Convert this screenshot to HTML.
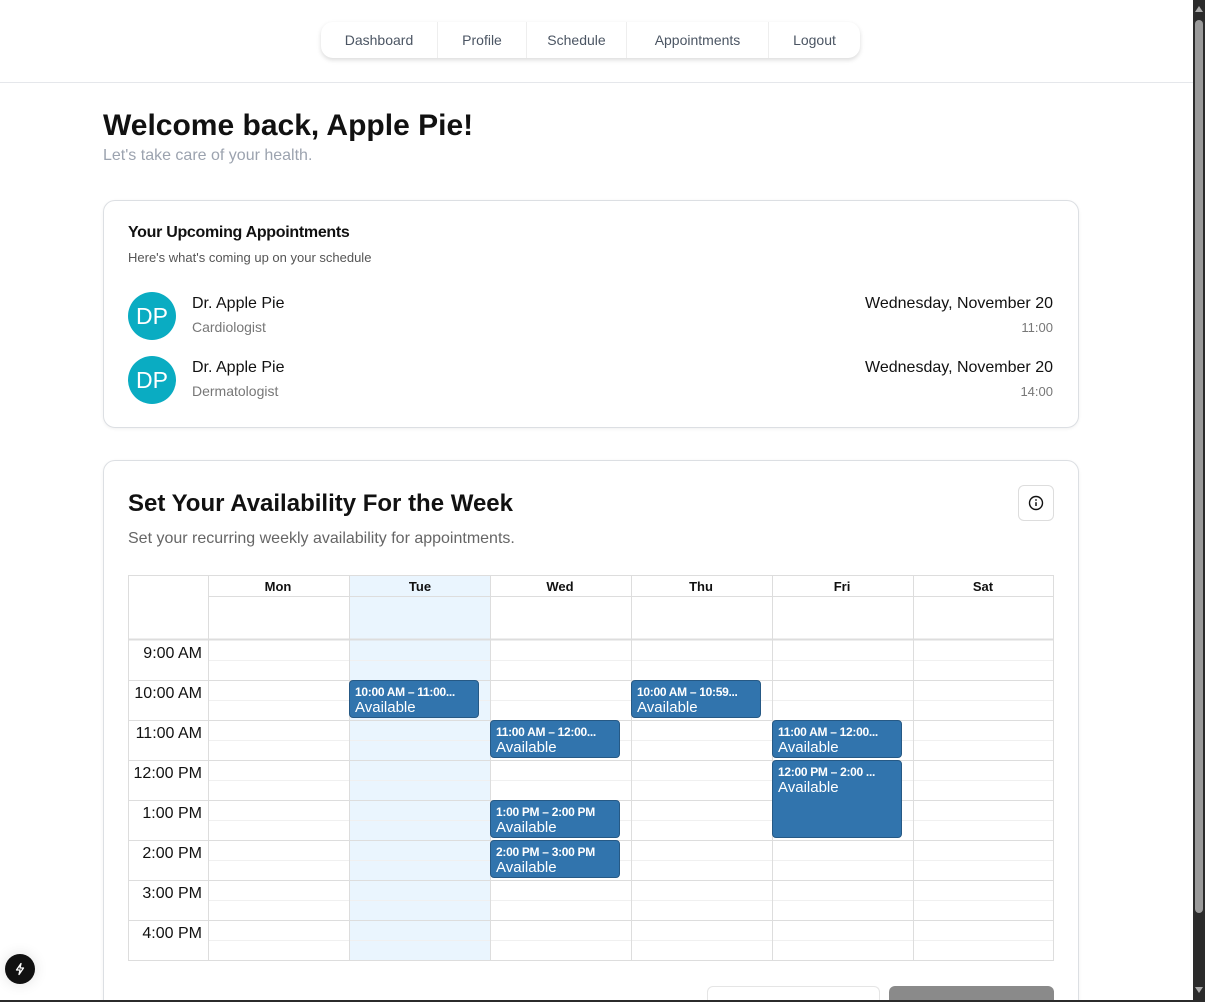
<!DOCTYPE html>
<html style="width:1205px;height:1002px;overflow:hidden"><head><style>
*{box-sizing:border-box;margin:0;padding:0}
body{width:1205px;height:1002px;overflow:hidden;background:#fff;font-family:"Liberation Sans",Arial,sans-serif;position:relative;color:#111}
.abs{position:absolute}
.nav{left:321px;top:22px;width:539px;height:36px;border-radius:12px;background:#fff;box-shadow:0 2px 5px rgba(0,0,0,.15);display:flex}
.nav div{display:flex;align-items:center;justify-content:center;font-size:14px;color:#4b5563;border-right:1px solid #eee;height:100%}
.nav div:last-child{border-right:none}
.hr{left:0;top:82px;width:1193px;height:1px;background:#e5e7eb}
.card{border:1px solid #dcdfe3;border-radius:12px;background:#fff;box-shadow:0 1px 3px rgba(0,0,0,.06)}
.av{width:48px;height:48px;border-radius:50%;background:#0aacc2;color:#fff;font-size:23px;display:flex;align-items:center;justify-content:center}
.ev{background:#3174ad;border:1px solid #265985;border-radius:4px;color:#fff;padding:3px 5px;overflow:hidden;white-space:nowrap}
.ev b{display:block;font-size:12px;font-weight:bold;line-height:16px;letter-spacing:-.3px}
.ev span{display:block;font-size:15px;line-height:16px}
</style></head><body>
<div class="abs nav">
<div style="width:117px">Dashboard</div><div style="width:89px">Profile</div><div style="width:100px">Schedule</div><div style="width:142px">Appointments</div><div style="width:91px">Logout</div>
</div>
<div class="abs hr"></div>
<div class="abs" style="left:103px;top:109px;font-size:30px;font-weight:bold">Welcome back, Apple Pie!</div>
<div class="abs" style="left:103px;top:147px;font-size:16px;color:#9ca3af">Let's take care of your health.</div>

<div class="abs card" style="left:103px;top:200px;width:976px;height:228px"></div>
<div class="abs" style="left:128px;top:224px;font-size:16px;font-weight:bold;letter-spacing:-.3px">Your Upcoming Appointments</div>
<div class="abs" style="left:128px;top:250px;font-size:13px;color:#555">Here's what's coming up on your schedule</div>
<div class="abs av" style="left:128px;top:292px">DP</div>
<div class="abs" style="left:192px;top:295px;font-size:16px">Dr. Apple Pie</div>
<div class="abs" style="left:192px;top:319px;font-size:14px;color:#777">Cardiologist</div>
<div class="abs" style="right:152px;top:295px;font-size:16px">Wednesday, November 20</div>
<div class="abs" style="right:152px;top:320px;font-size:13px;color:#777">11:00</div>
<div class="abs av" style="left:128px;top:356px">DP</div>
<div class="abs" style="left:192px;top:359px;font-size:16px">Dr. Apple Pie</div>
<div class="abs" style="left:192px;top:383px;font-size:14px;color:#777">Dermatologist</div>
<div class="abs" style="right:152px;top:359px;font-size:16px">Wednesday, November 20</div>
<div class="abs" style="right:152px;top:384px;font-size:13px;color:#777">14:00</div>

<div class="abs card" style="left:103px;top:460px;width:976px;height:560px"></div>
<div class="abs" style="left:128px;top:490px;font-size:24px;font-weight:bold">Set Your Availability For the Week</div>
<div class="abs" style="left:128px;top:530px;font-size:16px;color:#666">Set your recurring weekly availability for appointments.</div>
<div class="abs" style="left:1018px;top:485px;width:36px;height:36px;border:1px solid #ddd;border-radius:6px;display:flex;align-items:center;justify-content:center">
<svg width="16" height="16" viewBox="0 0 16 16"><circle cx="8" cy="8" r="6.5" fill="none" stroke="#111" stroke-width="1.4"/><line x1="8" y1="7.2" x2="8" y2="11" stroke="#111" stroke-width="1.5"/><circle cx="8" cy="5" r=".9" fill="#111"/></svg></div>

<svg class="abs" style="left:0;top:0" width="1193" height="1000">
<rect x="349" y="576" width="141" height="385" fill="#eaf5fe"/>
<g stroke="#f0f0f0" stroke-width="1">
<line x1="208" y1="660.5" x2="1054" y2="660.5"/><line x1="208" y1="700.5" x2="1054" y2="700.5"/><line x1="208" y1="740.5" x2="1054" y2="740.5"/><line x1="208" y1="780.5" x2="1054" y2="780.5"/><line x1="208" y1="820.5" x2="1054" y2="820.5"/><line x1="208" y1="860.5" x2="1054" y2="860.5"/><line x1="208" y1="900.5" x2="1054" y2="900.5"/><line x1="208" y1="940.5" x2="1054" y2="940.5"/>
</g>
<g stroke="#ddd" stroke-width="1">
<rect x="128.5" y="575.5" width="925" height="385" fill="none"/>
<line x1="208" y1="596.5" x2="1054" y2="596.5"/>
<line x1="128" y1="639.5" x2="1054" y2="639.5" stroke-width="2"/>
<line x1="128" y1="680.5" x2="1054" y2="680.5"/><line x1="128" y1="720.5" x2="1054" y2="720.5"/><line x1="128" y1="760.5" x2="1054" y2="760.5"/><line x1="128" y1="800.5" x2="1054" y2="800.5"/><line x1="128" y1="840.5" x2="1054" y2="840.5"/><line x1="128" y1="880.5" x2="1054" y2="880.5"/><line x1="128" y1="920.5" x2="1054" y2="920.5"/>
<line x1="208.5" y1="576" x2="208.5" y2="961"/><line x1="349.5" y1="576" x2="349.5" y2="961"/><line x1="490.5" y1="576" x2="490.5" y2="961"/><line x1="631.5" y1="576" x2="631.5" y2="961"/><line x1="772.5" y1="576" x2="772.5" y2="961"/><line x1="913.5" y1="576" x2="913.5" y2="961"/>
</g>
<g font-family="Liberation Sans,Arial,sans-serif" font-size="13" font-weight="bold" text-anchor="middle" fill="#111">
<text x="278" y="591">Mon</text><text x="420" y="591">Tue</text><text x="560" y="591">Wed</text><text x="701" y="591">Thu</text><text x="842" y="591">Fri</text><text x="983" y="591">Sat</text>
</g>
<g font-family="Liberation Sans,Arial,sans-serif" font-size="16" text-anchor="end" fill="#111">
<text x="202" y="658">9:00 AM</text><text x="202" y="698">10:00 AM</text><text x="202" y="738">11:00 AM</text><text x="202" y="778">12:00 PM</text><text x="202" y="818">1:00 PM</text><text x="202" y="858">2:00 PM</text><text x="202" y="898">3:00 PM</text><text x="202" y="938">4:00 PM</text>
</g>
</svg>
<div class="abs ev" style="left:349px;top:680px;width:130px;height:38px"><b>10:00 AM – 11:00...</b><span>Available</span></div>
<div class="abs ev" style="left:631px;top:680px;width:130px;height:38px"><b>10:00 AM – 10:59...</b><span>Available</span></div>
<div class="abs ev" style="left:490px;top:720px;width:130px;height:38px"><b>11:00 AM – 12:00...</b><span>Available</span></div>
<div class="abs ev" style="left:772px;top:720px;width:130px;height:38px"><b>11:00 AM – 12:00...</b><span>Available</span></div>
<div class="abs ev" style="left:772px;top:760px;width:130px;height:78px"><b>12:00 PM – 2:00 ...</b><span>Available</span></div>
<div class="abs ev" style="left:490px;top:800px;width:130px;height:38px"><b>1:00 PM – 2:00 PM</b><span>Available</span></div>
<div class="abs ev" style="left:490px;top:840px;width:130px;height:38px"><b>2:00 PM – 3:00 PM</b><span>Available</span></div>

<div class="abs" style="left:707px;top:986px;width:173px;height:14px;border:1px solid #e5e5e5;border-bottom:none;border-radius:6px 6px 0 0;background:#fff"></div>
<div class="abs" style="left:889px;top:986px;width:165px;height:14px;border-radius:6px 6px 0 0;background:#8a8a8a"></div>

<div class="abs" style="left:5px;top:954px;width:30px;height:30px;border-radius:50%;background:#111;box-shadow:0 0 14px rgba(0,0,0,.12);display:flex;align-items:center;justify-content:center">
<svg width="14" height="14" viewBox="0 0 14 14"><path d="M8 1.5L3.5 8h3.5l-1 4.5L10.5 6H7z" fill="none" stroke="#fff" stroke-width="1.3" stroke-linejoin="round"/></svg></div>

<div class="abs" style="left:1193px;top:0;width:12px;height:1002px;background:#2b2b2b"></div>
<div class="abs" style="left:1195px;top:20px;width:8px;height:893px;background:#9a9a9a;border-radius:4px"></div>
<div class="abs" style="left:1195px;top:6px;width:0;height:0;border-left:4px solid transparent;border-right:4px solid transparent;border-bottom:6px solid #aaa"></div>
<div class="abs" style="left:1195px;top:987px;width:0;height:0;border-left:4px solid transparent;border-right:4px solid transparent;border-top:6px solid #aaa"></div>
<div class="abs" style="left:0;top:1000px;width:1205px;height:2px;background:#2b2b2b"></div>
</body></html>
